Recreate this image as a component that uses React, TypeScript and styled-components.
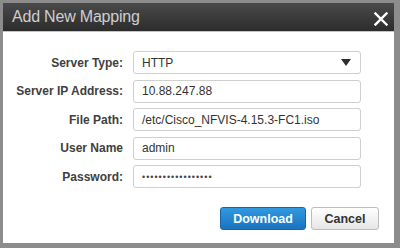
import {Fragment} from "react";
import styled, {createGlobalStyle} from "styled-components";

const GlobalStyle = createGlobalStyle`
    html, body {
        margin: 0;
        padding: 0;
        background: #8c8c8c;
    }
    body {
        font-family: "Liberation Sans", Arial, Helvetica, sans-serif;
    }
`

const Frame = styled.div`
    width: 400px;
    height: 248px;
    box-sizing: border-box;
    padding: 3px 6px 5px 3px;
    background: #8c8c8c;
    display: flex;
`

const Dialog = styled.div`
    flex: 1;
    display: flex;
    flex-direction: column;
    background: #ffffff;
`

const Header = styled.div`
    height: 28px;
    display: flex;
    align-items: center;
    justify-content: space-between;
    padding: 0 6px 0 9px;
    background: linear-gradient(#4a4a4a, #2c2c2c);
    border-bottom: 1px solid #c4c4c4;
`

const Title = styled.div`
    color: #cfcfcf;
    font-size: 16px;
    letter-spacing: -0.2px;
`

const CloseButton = styled.button`
    border: none;
    background: none;
    padding: 0;
    width: 14px;
    height: 14px;
    margin-top: 3px;
    cursor: pointer;
    display: flex;
`

const Body = styled.div`
    flex: 1;
    display: flex;
    flex-direction: column;
    padding: 19px 15px 0 0;
`

const Form = styled.div`
    display: grid;
    grid-template-columns: 120px 228px;
    column-gap: 10px;
    row-gap: 5.5px;
    align-items: center;
`

const Label = styled.label`
    text-align: right;
    font-weight: bold;
    font-size: 12px;
    color: #404040;
`

const Field = styled.div`
    height: 23px;
    box-sizing: border-box;
    border: 1px solid #cfcfcf;
    border-radius: 3px;
    display: flex;
    align-items: center;
    justify-content: space-between;
    padding: 0 9px 0 8px;
    font-size: 12px;
    color: #333;
    background: #fff;
`

const Dots = styled.span`
    font-size: 9px;
    letter-spacing: 1px;
    color: #444;
`

const Arrow = styled.span`
    width: 0;
    height: 0;
    border-left: 5px solid transparent;
    border-right: 5px solid transparent;
    border-top: 7px solid #2e2e2e;
`

const Actions = styled.div`
    display: flex;
    justify-content: flex-end;
    gap: 5px;
    margin-top: 19px;
`

const Button = styled.button<{ $primary?: boolean }>`
    height: 23px;
    width: ${p => p.$primary ? "86px" : "68px"};
    border-radius: 3px;
    font-family: inherit;
    font-weight: bold;
    font-size: 12.5px;
    padding: 0;
    cursor: pointer;
    color: ${p => p.$primary ? "#ffffff" : "#333333"};
    border: 1px solid ${p => p.$primary ? "#1868a8" : "#bdbdbd"};
    background: ${p => p.$primary
            ? "linear-gradient(#3199e0, #1a73c0)"
            : "linear-gradient(#ffffff, #e6e6e6)"};
`

const rows: { label: string, value: string, kind?: "select" | "password" }[] = [
    {label: "Server Type:", value: "HTTP", kind: "select"},
    {label: "Server IP Address:", value: "10.88.247.88"},
    {label: "File Path:", value: "/etc/Cisco_NFVIS-4.15.3-FC1.iso"},
    {label: "User Name", value: "admin"},
    {label: "Password:", value: "•••••••••••••••••", kind: "password"},
]

export default function App() {
    return (
        <>
            <GlobalStyle/>
            <Frame>
                <Dialog>
                    <Header>
                        <Title>Add New Mapping</Title>
                        <CloseButton aria-label="Close">
                            <svg width="14" height="14" viewBox="0 0 14 14">
                                <path d="M1.5 1.5 L12.5 12.5 M12.5 1.5 L1.5 12.5" stroke="#ffffff"
                                      strokeWidth="2.4" strokeLinecap="square"/>
                            </svg>
                        </CloseButton>
                    </Header>
                    <Body>
                        <Form>
                            {rows.map(r => (
                                <Fragment key={r.label}>
                                    <Label>{r.label}</Label>
                                    <Field>
                                        {r.kind === "password" ? <Dots>{r.value}</Dots> : <span>{r.value}</span>}
                                        {r.kind === "select" && <Arrow/>}
                                    </Field>
                                </Fragment>
                            ))}
                        </Form>
                        <Actions>
                            <Button $primary>Download</Button>
                            <Button>Cancel</Button>
                        </Actions>
                    </Body>
                </Dialog>
            </Frame>
        </>
    )
}
